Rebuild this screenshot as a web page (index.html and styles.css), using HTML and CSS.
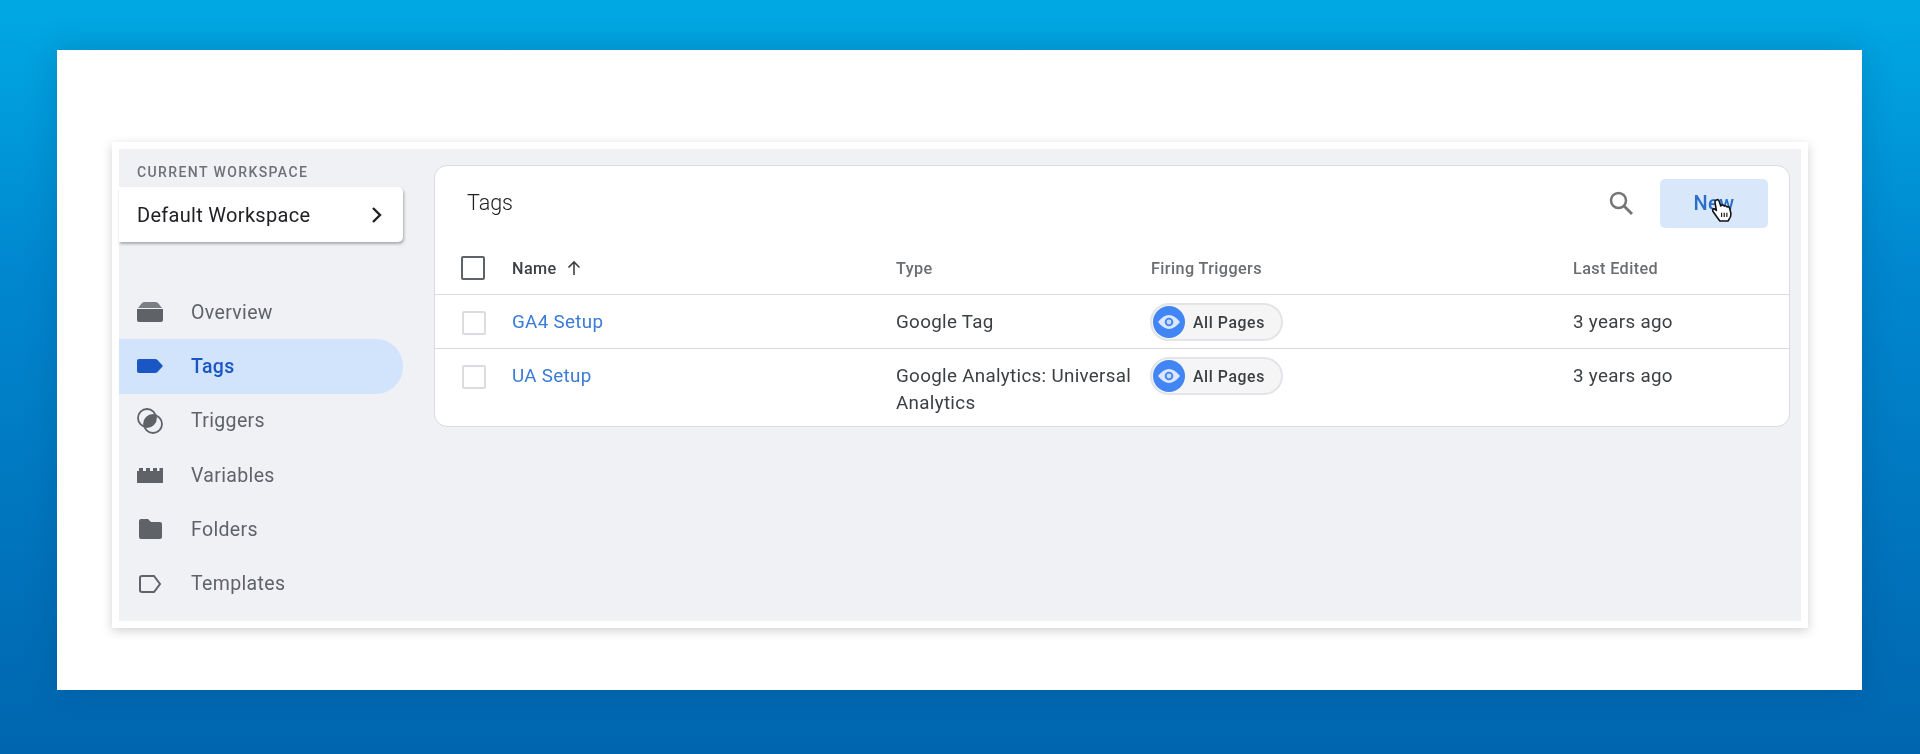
FILE: index.html
```html
<!DOCTYPE html>
<html lang="en">
    <head>
        <meta charset="UTF-8">
        <title>Tags</title>
        <link rel="stylesheet" href="styles.css">
    </head>

    <body>
        <div class="sheet">
            <div class="frame">
                <div class="workspace">
                    <aside class="sidebar">
                        <div class="ws-label">CURRENT WORKSPACE</div>
                        <div class="ws-card">
                            <span>Default Workspace</span>
                            <svg width="14" height="18" viewBox="0 0 14 18"><path d="M3 2l7 7-7 7" fill="none" stroke="#202124" stroke-width="2.4"/></svg>
                        </div>
                        <nav class="nav">
                            <a class="nav-item">
                                <svg class="nav-icon" viewBox="0 0 26 26"><path d="M1 9l4-5q1-1 2.500-1h11q1.500 0 2.500 1l4 5z" fill="#5f6368" opacity=".8"/><path d="M0 10h26v11q0 2-2 2H2q-2 0-2-2z" fill="#5f6368"/></svg>
                                Overview
                            </a>
                            <a class="nav-item active">
                                <svg class="nav-icon" viewBox="0 0 26 26"><path d="M2 6h16q1.500 0 2.500 1L26 13l-5.500 6q-1 1-2.500 1H2q-2 0-2-2V8q0-2 2-2z" fill="#1a56c4"/></svg>
                                Tags
                            </a>
                            <a class="nav-item">
                                <svg class="nav-icon" viewBox="0 0 26 26"><circle cx="10" cy="10" r="9" fill="none" stroke="#5f6368" stroke-width="1.800"/><circle cx="16" cy="16" r="9" fill="none" stroke="#5f6368" stroke-width="1.800"/><path d="M18.600 7.400A9 9 0 0 1 7.400 18.600 9 9 0 0 1 18.600 7.400z" fill="#5f6368"/></svg>
                                Triggers
                            </a>
                            <a class="nav-item">
                                <svg class="nav-icon" viewBox="0 0 26 26"><path d="M0 9h2V6h4v3h3V6h4v3h3V6h4v3h2.500V6H26v15H0z" fill="#5f6368"/></svg>
                                Variables
                            </a>
                            <a class="nav-item">
                                <svg class="nav-icon" viewBox="0 0 26 26"><path d="M4 3h7l3 3h9q2 0 2 2v13q0 2-2 2H4q-2 0-2-2V5q0-2 2-2z" fill="#5f6368"/></svg>
                                Folders
                            </a>
                            <a class="nav-item">
                                <svg class="nav-icon" viewBox="0 0 26 26"><path d="M5 5h12l6 8-6 8H5q-2 0-2-2V7q0-2 2-2z" fill="none" stroke="#5f6368" stroke-width="2"/></svg>
                                Templates
                            </a>
                        </nav>
                    </aside>

                    <main class="panel">
                        <header class="panel-head">
                            <h1 class="panel-title">Tags</h1>
                            <svg class="search" width="28" height="28" viewBox="0 0 28 28"><circle cx="11.500" cy="11.500" r="7.500" fill="none" stroke="#757575" stroke-width="2.500"/><path d="M17 17l8 8" stroke="#757575" stroke-width="2.800"/></svg>
                            <button class="new-btn">New</button>
                        </header>

                        <div class="row row-head">
                            <span class="check check-dark"></span>
                            <span class="name-head">Name
                                <svg width="16" height="16" viewBox="0 0 16 16"><path d="M8 15V2M2.500 7.500L8 2l5.500 5.500" fill="none" stroke="#3c4043" stroke-width="1.600"/></svg>
                            </span>
                            <span>Type</span>
                            <span>Firing Triggers</span>
                            <span>Last Edited</span>
                        </div>

                        <div class="row">
                            <span class="check"></span>
                            <a class="tag-link">GA4 Setup</a>
                            <span>Google Tag</span>
                            <span class="chip">
                                <span class="chip-icon"><svg width="24" height="16" viewBox="0 0 24 16"><path d="M1 8q11-14 22 0-11 14-22 0z" fill="#dbe7fb"/><circle cx="12" cy="8" r="4.300" fill="#4285f4"/><circle cx="12" cy="8" r="2.400" fill="#c8dafa"/></svg></span>
                                All Pages
                            </span>
                            <span>3 years ago</span>
                        </div>

                        <div class="row row-last">
                            <span class="check"></span>
                            <a class="tag-link">UA Setup</a>
                            <span>Google Analytics: Universal Analytics</span>
                            <span class="chip">
                                <span class="chip-icon"><svg width="24" height="16" viewBox="0 0 24 16"><path d="M1 8q11-14 22 0-11 14-22 0z" fill="#dbe7fb"/><circle cx="12" cy="8" r="4.300" fill="#4285f4"/><circle cx="12" cy="8" r="2.400" fill="#c8dafa"/></svg></span>
                                All Pages
                            </span>
                            <span>3 years ago</span>
                        </div>

                        <!-- mouse pointer from the recording -->
                        <svg class="pointer" width="21" height="24" viewBox="0 0 24 26"><path d="M5 1.500q2-1 3 1l2 6 1-1q2-1 3 1 2-1 3 1 2-1 3 1l1.500 6q.5 4-2 7l-1 2H9l-3-4-5-7q-1-2 1-3l3 2-1.500-9q-.5-2.500 1.500-3z" fill="#fff" stroke="#111" stroke-width="1.800" stroke-linejoin="round"/><path d="M11 16v5M14 16v5M17 16v5" stroke="#111" stroke-width="1.300"/></svg>
                    </main>
                </div>
            </div>
        </div>
    </body>
</html>
```

FILE: styles.css
```css
* {
    box-sizing: border-box;
}

html, body {
    height: 100%;
}

body {
    margin: 0;
    padding: 50px 58px 64px 57px;
    background: linear-gradient(180deg, #00a9e3 0%, #0088cf 35%, #0065af 100%);
    font-family: Roboto, "Liberation Sans", sans-serif;
    overflow: hidden;
}

.sheet {
    height: 100%;
    background: #fff;
    padding: 92px 54px 62px 55px;
    box-shadow: 0 0 30px rgba(0, 50, 110, .22);
}

.frame {
    height: 100%;
    padding: 7px;
    background: #fff;
    box-shadow: 0 3px 10px rgba(0, 0, 0, .18);
}

.workspace {
    height: 100%;
    display: flex;
    background: #f0f1f5;
    filter: blur(.6px);
}

.sidebar {
    width: 284px;
    flex: none;
}

.ws-label {
    height: 38px;
    padding: 15px 0 0 18px;
    font-size: 14px;
    font-weight: 500;
    line-height: 16px;
    letter-spacing: 1.400px;
    color: #6e7175;
}

.ws-card {
    height: 55px;
    display: flex;
    align-items: center;
    justify-content: space-between;
    padding: 0 19px 0 18px;
    background: #fff;
    border-radius: 0 5px 5px 0;
    box-shadow: 1px 2px 3px rgba(60, 64, 67, .4);
    font-size: 20px;
    letter-spacing: .3px;
    color: #202124;
}

.nav {
    margin-top: 43px;
}

.nav-item {
    height: 54.300px;
    display: flex;
    align-items: center;
    gap: 28px;
    padding-left: 18px;
    border-radius: 0 27px 27px 0;
    font-size: 19.500px;
    letter-spacing: .35px;
    color: #5f6368;
}

.nav-item.active {
    background: #d2e3fc;
    color: #1a56c4;
    font-weight: 500;
}

.nav-icon {
    width: 26px;
    height: 26px;
    flex: none;
}

.panel {
    position: relative;
    width: 1356px;
    height: 262px;
    margin: 16px 0 0 31px;
    background: #fff;
    border: 1px solid #dadce0;
    border-radius: 13px;
}

.panel-head {
    height: 75px;
    display: flex;
    align-items: center;
    padding: 0 21px 3px 32px;
}

.panel-head .search,
.panel-head .new-btn {
    position: relative;
    top: 1px;
}

.panel-title {
    margin: 0 auto 0 0;
    font-size: 21.500px;
    font-weight: 300;
    color: #202124;
}

.search {
    margin-right: 25px;
}

.new-btn {
    width: 108px;
    height: 49px;
    border: 0;
    border-radius: 5px;
    background: #d9e7fa;
    color: #2a6fc9;
    font: 500 20px Roboto, "Liberation Sans", sans-serif;
    letter-spacing: .4px;
}

.row {
    display: grid;
    grid-template-columns: 77px 384px 255px 422px 1fr;
    align-items: start;
    padding-top: 14px;
    height: 54px;
    border-top: 1px solid #dadce0;
    font-size: 18.800px;
    line-height: 27px;
    letter-spacing: .32px;
    color: #3c4043;
}

.row-head {
    height: 53px;
    padding-top: 1px;
    align-items: center;
    border-top: 0;
    font-size: 16.200px;
    font-weight: 500;
    letter-spacing: .4px;
    color: #6a6d71;
}

.row-last {
    height: 78px;
}

.check {
    width: 24px;
    height: 24px;
    margin: 2px 0 0 27px;
    border: 2px solid #dadce0;
    border-radius: 2px;
}

.check-dark {
    border-color: #5f6368;
    margin-top: 0;
    margin-left: 26px;
}

.name-head {
    display: flex;
    align-items: center;
    gap: 9px;
    color: #3c4043;
}

.tag-link {
    color: #3a7bd5;
}

.chip {
    width: 133px;
    height: 38px;
    margin: -6px 0 0 -1px;
    display: flex;
    align-items: center;
    gap: 8px;
    padding-left: 1px;
    border: 2px solid #e3e4e7;
    border-radius: 19px;
    background: #f5f5f6;
    font-size: 15.800px;
    font-weight: 500;
    letter-spacing: .6px;
    color: #3c4043;
}

.chip-icon {
    width: 32px;
    height: 32px;
    flex: none;
    display: flex;
    align-items: center;
    justify-content: center;
    border-radius: 50%;
    background: #4285f4;
}

.pointer {
    position: absolute;
    top: 32px;
    left: 1277px;
}
```
